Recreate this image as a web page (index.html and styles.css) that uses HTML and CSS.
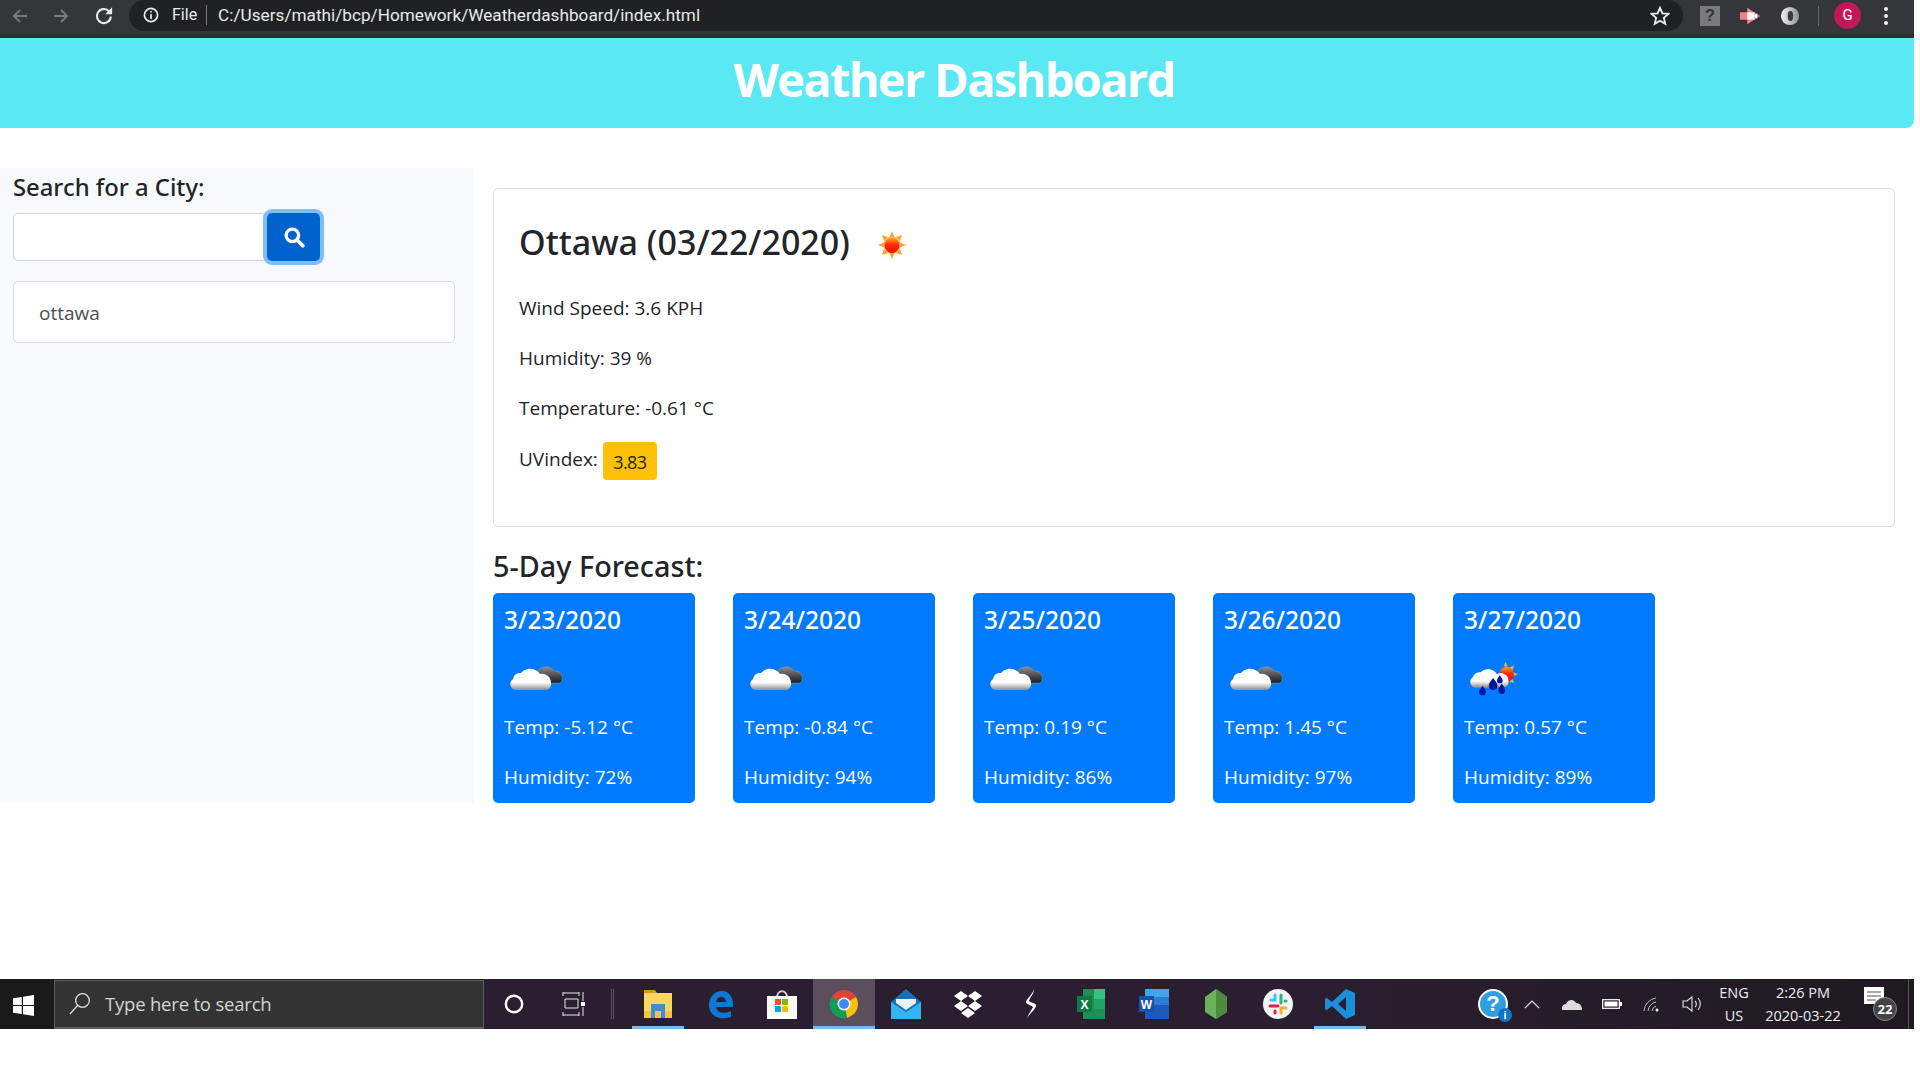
FILE: index.html
```html
<!DOCTYPE html>
<html lang="en">
<head>
<meta charset="utf-8">
<title>Weather Dashboard</title>
<link rel="stylesheet" href="styles.css">
</head>
<body>
<svg class="defs" width="0" height="0" aria-hidden="true">
  <defs>
    <linearGradient id="cloudFront" x1="0" y1="0" x2="0" y2="1"><stop offset="0" stop-color="#fff"/><stop offset=".65" stop-color="#fdfdfd"/><stop offset="1" stop-color="#8d8d8d"/></linearGradient>
    <linearGradient id="cloudBack" x1="0" y1="0" x2="0" y2="1"><stop offset="0" stop-color="#8a8a8a"/><stop offset="1" stop-color="#1c1c1c"/></linearGradient>
    <linearGradient id="sunCore" x1="0" y1="0" x2="0" y2="1"><stop offset="0" stop-color="#ffa01f"/><stop offset=".45" stop-color="#ff2a0a"/><stop offset="1" stop-color="#f01000"/></linearGradient>
    <symbol id="clouds" viewBox="0 0 54 30">
      <path d="M27 12a9 9 0 0 1 8-7a9 9 0 0 1 9 4a7 7 0 0 1 8 9a3 3 0 0 1-3 3H31z" fill="url(#cloudBack)" stroke="#a9a9a9" stroke-width=".4"/>
      <path d="M6 28a6 6 0 0 1-3-11a7 7 0 0 1 8-6a12 12 0 0 1 19 1a9 9 0 0 1 11 9a6 6 0 0 1-4 7z" fill="url(#cloudFront)"/>
    </symbol>
  </defs>
</svg>

<div class="browser-bar">
  <div class="nav-icons">
    <svg class="ico16" viewBox="0 0 16 16"><path d="M15 8H2M8 2L2 8l6 6" class="stroke-dim"/></svg>
    <svg class="ico16" viewBox="0 0 16 16"><path d="M1 8h13M8 2l6 6-6 6" class="stroke-dim"/></svg>
    <svg class="ico18" viewBox="0 0 16 16"><path d="M13.500 8.500A5.600 5.600 0 1 1 12 4.200" class="stroke-light"/><path d="M14.500 1v5.500H9z" fill="#e8eaed"/></svg>
  </div>
  <div class="omnibox">
    <div class="omni-left">
      <svg class="ico16" viewBox="0 0 16 16"><circle cx="8" cy="8" r="6.600" class="stroke-light"/><path d="M8 4v1.600M8 7v5" class="stroke-light"/></svg>
      <span class="omni-file">File</span>
      <span class="omni-sep"></span>
      <span class="omni-url">C:/Users/mathi/bcp/Homework/Weatherdashboard/index.html</span>
    </div>
    <svg class="ico18" viewBox="0 0 18 18"><path d="M9 1.600l2.200 5 5.400.5-4.100 3.600 1.200 5.300L9 13.300 4.300 16l1.200-5.300L1.400 7.100l5.400-.5z" class="stroke-light"/></svg>
  </div>
  <div class="ext-icons">
    <span class="ext-help">?</span>
    <svg class="ext-svg" viewBox="0 0 22 18"><path d="M0 5h8V0l14 9-14 9v-5H0z" fill="#fb7e84"/><path d="M8 5h8v8H8z" fill="#fff"/><path d="M16 8l3-2v6l-3-2z" fill="#fff"/></svg>
    <svg class="ext-svg" viewBox="0 0 22 22"><defs><linearGradient id="ring" x1="0" x2="1"><stop offset="0" stop-color="#f2f2f2"/><stop offset="1" stop-color="#8f8f8f"/></linearGradient></defs><circle cx="11" cy="11" r="10" fill="url(#ring)"/><ellipse cx="11.500" cy="11" rx="3" ry="5.500" fill="#3a3a3d"/></svg>
    <span class="ext-sep"></span>
    <span class="avatar">G</span>
    <span class="kebab"><i></i><i></i><i></i></span>
  </div>
</div>

<header class="hero"><h1>Weather Dashboard</h1></header>

<main class="page">
  <aside class="sidebar">
    <h4 class="search-title">Search for a City:</h4>
    <form class="search-row">
      <input class="search-input" type="text" aria-label="City">
      <button class="search-btn" type="button" aria-label="Search">
        <svg viewBox="0 0 20 20" width="22" height="22"><circle cx="8.500" cy="8.500" r="5.700" fill="none" stroke="#fff" stroke-width="3"/><path d="M13 13l5 5" stroke="#fff" stroke-width="3.400" stroke-linecap="round"/></svg>
      </button>
    </form>
    <ul class="history"><li>ottawa</li></ul>
  </aside>

  <section class="content">
    <div class="today">
      <h3 class="today-title">Ottawa (03/22/2020)
        <svg class="sun" viewBox="0 0 30 30">
          <g fill="#f9a332">
            <path d="M15 1l2.500 6h-5zM15 29l2.500-6h-5zM1 15l6-2.500v5zM29 15l-6-2.500v5z"/>
            <path d="M5 5l6 2-4 4zM25 5l-2 6-4-4zM5 25l2-6 4 4zM25 25l-6-2 4-4z"/>
          </g>
          <circle cx="15" cy="15" r="8.700" fill="#fbb45c"/>
          <circle cx="15" cy="15.500" r="7.500" fill="url(#sunCore)"/>
        </svg>
      </h3>
      <p>Wind Speed: 3.6 KPH</p>
      <p>Humidity: 39 %</p>
      <p>Temperature: -0.61 °C</p>
      <p class="uv">UVindex: <span class="uv-badge">3.83</span></p>
    </div>

    <h4 class="forecast-title">5-Day Forecast:</h4>
    <div class="forecast">
      <article class="day">
        <h5>3/23/2020</h5>
        <svg class="wx" viewBox="0 0 54 30"><use href="#clouds"/></svg>
        <p>Temp: -5.12 °C</p><p>Humidity: 72%</p>
      </article>
      <article class="day">
        <h5>3/24/2020</h5>
        <svg class="wx" viewBox="0 0 54 30"><use href="#clouds"/></svg>
        <p>Temp: -0.84 °C</p><p>Humidity: 94%</p>
      </article>
      <article class="day">
        <h5>3/25/2020</h5>
        <svg class="wx" viewBox="0 0 54 30"><use href="#clouds"/></svg>
        <p>Temp: 0.19 °C</p><p>Humidity: 86%</p>
      </article>
      <article class="day">
        <h5>3/26/2020</h5>
        <svg class="wx" viewBox="0 0 54 30"><use href="#clouds"/></svg>
        <p>Temp: 1.45 °C</p><p>Humidity: 97%</p>
      </article>
      <article class="day">
        <h5>3/27/2020</h5>
        <svg class="wx wx-rain" viewBox="0 0 54 36">
          <g fill="#f5b041"><path d="M37 0l2 5h-4zM50 13l-5 2v-4zM46 4l-2 5-3-3zM46 22l-5-1 3-3z"/></g>
          <circle cx="38" cy="13" r="7.500" fill="url(#sunCore)"/>
          <path d="M6 27a6 6 0 0 1-3-11a7 7 0 0 1 8-5a11 11 0 0 1 17 2a8 8 0 0 1 12 7a6 6 0 0 1-5 7z" fill="url(#cloudFront)"/>
          <g fill="#00169c">
            <path d="M13 25c3 4 3.500 5 3.500 6.500a3.500 3.500 0 0 1-7 0c0-1.500.5-2.500 3.500-6.500z"/>
            <path d="M24 17c3.500 4.500 4.500 6 4.500 8a4.500 4.500 0 0 1-9 0c0-2 1-3.500 4.500-8z"/>
            <path d="M31 14c2 3 3 4 3 5.500a3 3 0 0 1-6 0c0-1.500 1-2.500 3-5.500z"/>
            <path d="M33 23c3 4 3.500 5 3.500 7a3.500 3.500 0 0 1-7 0c0-2 .5-3 3.500-7z"/>
          </g>
        </svg>
        <p>Temp: 0.57 °C</p><p>Humidity: 89%</p>
      </article>
    </div>
  </section>
</main>

<footer class="taskbar">
  <div class="start">
    <svg width="21" height="21" viewBox="0 0 21 21"><path d="M0 3.200l8.800-1.300v8H0zM10 1.700L21 0v9.900H10zM0 11.100h8.800v8L0 17.800zM10 11.100h11V21l-11-1.700z" fill="#fff"/></svg>
  </div>
  <div class="search-box">
    <svg width="22" height="24" viewBox="0 0 22 24"><circle cx="13.500" cy="8.500" r="6.800" fill="none" stroke="#ddd" stroke-width="1.300"/><path d="M8.500 13.500L1 22" stroke="#ddd" stroke-width="1.300"/></svg>
    <span>Type here to search</span>
  </div>
  <div class="tb-sys">
    <svg width="20" height="20" viewBox="0 0 20 20"><circle cx="10" cy="10" r="8.200" fill="none" stroke="#fff" stroke-width="2.400"/></svg>
    <svg width="24" height="24" viewBox="0 0 24 24"><path d="M1 4V0M17 4V0M1 1h16M3 7h13v9H3zM1 23h16M1 24v-4M17 24v-4M21 0v9M21 15v9" fill="none" stroke="#e8e8e8" stroke-width="1"/><rect x="19" y="10" width="4" height="4" fill="#fff"/></svg>
    <span class="tb-sep"></span>
  </div>
  <div class="tb-apps">
    <span class="app running">
      <svg viewBox="0 0 30 30"><path d="M1 1h11l2 3h-13z" fill="#d29b1f"/><path d="M1 4h28v25H1z" fill="#fdd662"/><path d="M1 22h28v7H1z" fill="#f5c242"/><path d="M8 15h14v14h-4v-7h-6v7H8z" fill="#3f8fce"/></svg>
    </span>
    <span class="app">
      <svg viewBox="0 0 30 30"><path d="M28 18H11c.5 5 7 8 15 4v6c-11 4-22-1-22-12C4 8 10 2 17 2c7 0 11 6 11 13zM21 13c0-6-9-7-10 0z" fill="#0f77d6"/></svg>
    </span>
    <span class="app">
      <svg viewBox="0 0 30 30"><path d="M10 9c0-9 10-9 10 0" fill="none" stroke="#cfcfcf" stroke-width="2"/><path d="M0 7h30v23H0z" fill="#fff"/><path d="M8 10h6v6H8z" fill="#f25022"/><path d="M15 10h6v6h-6z" fill="#7fba00"/><path d="M8 17h6v6H8z" fill="#00a4ef"/><path d="M15 17h6v6h-6z" fill="#ffb900"/></svg>
    </span>
    <span class="app running active">
      <svg viewBox="0 0 30 30"><circle cx="15" cy="15" r="14" fill="#db4437"/><path d="M15 15L27 8a14 14 0 0 1-9 20.700z" fill="#f4c20d"/><path d="M15 15l3 13.700A14 14 0 0 1 2.600 8z" fill="#0f9d58"/><circle cx="15" cy="15" r="6.500" fill="#fff"/><circle cx="15" cy="15" r="5" fill="#4285f4"/></svg>
    </span>
    <span class="app">
      <svg viewBox="0 0 30 30"><path d="M0 13L15 0l15 13v17H0z" fill="#1b6fb5"/><path d="M0 13l15 10 15-10v17H0z" fill="#33b3f0"/><path d="M5 10h20v4l-10 7-10-7z" fill="#e8f3fb"/></svg>
    </span>
    <span class="app">
      <svg viewBox="0 0 30 30"><path d="M8 2l7 5-7 5-7-5zM22 2l7 5-7 5-7-5zM8 12l7 5-7 5-7-5zM22 12l7 5-7 5-7-5zM15 19l7 5-7 5-7-5z" fill="#fff"/></svg>
    </span>
    <span class="app">
      <svg viewBox="0 0 30 30"><path d="M19 0c-1 5-7 9-8 13-.5 2 5 3 7 5-2 4-5 7-6 12 1-4 8-9 9-13 .5-3-5-3-7-5 1-4 5-7 5-12z" fill="#fff"/></svg>
    </span>
    <span class="app">
      <svg viewBox="0 0 30 30"><path d="M6 0h22v30H6z" fill="#1e8f55"/><path d="M17 0h11v10H17z" fill="#33c481"/><path d="M17 10h11v10H17z" fill="#21a366"/><path d="M0 7h15v16H0z" fill="#107c41"/><text x="7.500" y="20" class="office-letter">X</text></svg>
    </span>
    <span class="app">
      <svg viewBox="0 0 30 30"><path d="M6 0h24v30H6z" fill="#185abd"/><path d="M6 0h24v8H6z" fill="#41a5ee"/><path d="M6 8h24v8H6z" fill="#2b7cd3"/><path d="M0 7h15v16H0z" fill="#1553b0"/><text x="7.500" y="20" class="office-letter">W</text></svg>
    </span>
    <span class="app">
      <svg viewBox="0 0 30 30"><path d="M15 0l11 8v15l-11 7-11-7V8z" fill="#69b25a"/><path d="M15 0l11 8v15l-11 7z" fill="#4b8c3f"/></svg>
    </span>
    <span class="app">
      <svg viewBox="0 0 30 30"><circle cx="15" cy="15" r="15" fill="#f4f4f4"/><path d="M12 6v5H8" stroke="#36c5f0" stroke-width="3" fill="none" stroke-linecap="round"/><path d="M18 6v8" stroke="#2eb67d" stroke-width="3" stroke-linecap="round"/><path d="M22 12h1" stroke="#2eb67d" stroke-width="3" stroke-linecap="round"/><path d="M7 17h8" stroke="#e01e5a" stroke-width="3" stroke-linecap="round"/><path d="M12 22v2" stroke="#e01e5a" stroke-width="3" stroke-linecap="round"/><path d="M18 24v-5h5" stroke="#ecb22e" stroke-width="3" fill="none" stroke-linecap="round"/></svg>
    </span>
    <span class="app running">
      <svg viewBox="0 0 30 30"><path d="M21 0l9 4v22l-9 4-14-13-5 4-2-1V10l2-1 5 4zM21 8l-8 7 8 7z" fill="#1a8fdc"/></svg>
    </span>
  </div>
  <div class="tray">
    <span class="tray-help">?<i>i</i></span>
    <svg class="tray-ic" viewBox="0 0 20 20"><path d="M3 14l7-7 7 7" fill="none" stroke="#e4e4e4" stroke-width="1.200"/></svg>
    <svg class="tray-ic" viewBox="0 0 20 20"><path d="M0 16c-1-4 2-6 4-6 2-5 8-5 10-1 4 0 6 3 6 7z" fill="#dcdcdc"/></svg>
    <svg class="tray-ic" viewBox="0 0 20 20"><rect x=".7" y="5.700" width="16.600" height="8.600" fill="none" stroke="#fff" stroke-width="1.200"/><rect x="2.500" y="7.500" width="13" height="5" fill="#fff"/><rect x="18" y="8" width="2" height="4" fill="#fff"/></svg>
    <svg class="tray-ic" viewBox="0 0 20 20"><g fill="none" stroke="#bbb" stroke-width="1"><path d="M2 17A14 14 0 0 1 14 4"/><path d="M6 17A10 10 0 0 1 14 8"/><path d="M10 17a6 6 0 0 1 4-5"/></g><circle cx="15" cy="16" r="1.500" fill="#fff"/></svg>
    <svg class="tray-ic" viewBox="0 0 20 20"><path d="M1 7h4l5-4v14l-5-4H1z" fill="none" stroke="#e4e4e4" stroke-width="1.100"/><path d="M13 7a4 4 0 0 1 0 6M16 4a9 9 0 0 1 0 12" fill="none" stroke="#e4e4e4" stroke-width="1.100"/></svg>
    <div class="lang"><span>ENG</span><span>US</span></div>
    <div class="clock"><span>2:26 PM</span><span>2020-03-22</span></div>
    <div class="notif">
      <svg width="20" height="20" viewBox="0 0 20 20"><path d="M0 0h20v17H0z" fill="#fff"/><path d="M3 5h14M3 9h14M3 13h9" stroke="#555" stroke-width="1"/></svg>
      <span class="notif-count">22</span>
    </div>
    <span class="tray-end"></span>
  </div>
</footer>
</body>
</html>
```

FILE: styles.css
```css
* { box-sizing: border-box; }
html, body { margin: 0; padding: 0; background: #fff; }
body {
  width: 1914px;
  height: 1080px;
  display: flex;
  flex-direction: column;
  overflow: hidden;
  font-family: "Open Sans", "Noto Sans", sans-serif;
  color: #212529;
}
.defs { position: absolute; }

/* browser chrome */
.browser-bar {
  height: 38px;
  flex: none;
  background: #35363a;
  display: flex;
  align-items: flex-start;
  box-shadow: inset 0 -4px 0 #2c2d30;
}
.nav-icons { width: 129px; height: 31px; display: flex; align-items: center; padding-left: 12px; gap: 25px; }
.ico16 { width: 16px; height: 16px; flex: none; }
.ico18 { width: 20px; height: 20px; flex: none; }
.stroke-dim { fill: none; stroke: #7b7c80; stroke-width: 1.800; }
.stroke-light { fill: none; stroke: #e8eaed; stroke-width: 1.700; }
.omnibox {
  width: 1554px;
  height: 31px;
  background: #202124;
  border-radius: 16px;
  display: flex;
  align-items: center;
  justify-content: space-between;
  padding: 0 13px 0 14px;
}
.omni-left { display: flex; align-items: center; padding-bottom: 2px; }
.omni-file { margin-left: 13px; color: #e8eaed; font: 16px/20px Roboto, sans-serif; }
.omni-sep { width: 1px; height: 20px; background: #77787c; margin: 0 11px 0 9px; }
.omni-url { color: #e8eaed; font: 17.200px/20px Roboto, sans-serif; }
.ext-icons { flex: 1; height: 31px; display: flex; align-items: center; padding-left: 17px; }
.ext-help { width: 20px; height: 20px; background: #7a7a7a; color: #35363a; font: bold 17px/20px "Liberation Sans", sans-serif; text-align: center; }
.ext-svg { width: 20px; height: 20px; margin-left: 20px; flex: none; }
.ext-sep { width: 1px; height: 20px; background: #66676b; margin-left: 18px; }
.avatar { width: 27px; height: 27px; border-radius: 50%; background: #c2185b; color: #fff; font: 15px/27px Roboto, sans-serif; text-align: center; margin-left: 15px; }
.kebab { display: flex; flex-direction: column; gap: 3px; margin-left: 23px; }
.kebab i { width: 4px; height: 4px; border-radius: 50%; background: #f0f0f0; display: block; }

/* banner */
.hero {
  height: 90px;
  flex: none;
  background: #5ae8f2;
  border-bottom-right-radius: 8px;
  display: flex;
  align-items: center;
  justify-content: center;
  padding-right: 6px;
}
.hero h1 { margin: 0 0 8px 0; font-size: 47px; line-height: 60px; font-weight: 700; color: #fff; letter-spacing: -1.700px; }

/* page */
.page { height: 635px; flex: none; margin-top: 40px; display: flex; }
.sidebar { width: 474px; flex: none; background: #f8f9fa; padding: 0 19px 0 13px; }
.search-title { margin: 2px 0 8px; font-family: "Noto Sans", sans-serif; font-size: 23.800px; line-height: 35px; font-weight: 500; height: 35px; color: #212529; }
.search-row { display: flex; align-items: stretch; height: 48px; }
.search-input { width: 254px; height: 48px; border: 1px solid #ced4da; border-radius: 5px 0 0 5px; background: #fff; padding: 0; outline: none; }
.search-btn { width: 53px; height: 48px; border: 0; background: #0062cc; border-radius: 5px; box-shadow: 0 0 0 4px #80bdff; padding: 0; display: flex; align-items: center; justify-content: center; position: relative; }
.history { list-style: none; margin: 20px 0 0; padding: 0; }
.history li { height: 62px; border: 1px solid #dfdfdf; border-radius: 5px; background: #fff; color: #495057; font-size: 19px; line-height: 62px; padding-left: 25px; }

.content { flex: 1; padding: 20px 19px 0; min-width: 0; }
.today { height: 339px; border: 1px solid #dfdfdf; border-radius: 5px; background: #fff; padding: 31px 26px 0 25px; }
.today-title { margin: 0 0 11px; font-family: "Noto Sans", sans-serif; font-size: 34px; line-height: 44px; font-weight: 500; height: 65px; color: #212529; display: flex; align-items: flex-start; }
.sun { width: 30px; height: 30px; margin: 10px 0 0 27px; flex: none; }
.today p { margin: 0 0 26px; font-size: 19px; line-height: 24px; color: #212529; }
.today p.uv { margin: -4px 0 0; display: flex; align-items: flex-start; height: 38px; gap: 5px; line-height: 34px; }
.uv-badge { width: 54px; height: 38px; background: #ffc107; border-radius: 4px; font-size: 18px; line-height: 40px; text-align: center; letter-spacing: -.6px; }

.forecast-title { margin: 19px 0 0; font-family: "Noto Sans", sans-serif; font-size: 28.800px; line-height: 40px; height: 46px; font-weight: 500; }
.forecast { display: flex; gap: 38px; padding-top: 1px; }
.day { width: 202px; height: 210px; background: #007bff; color: #fff; border-radius: 5px; padding: 10px 11px 0; }
.day h5 { margin: 0; font-family: "Noto Sans", sans-serif; font-size: 24.500px; line-height: 34px; font-weight: 500; color: #fff; height: 34px; }
.wx { width: 54px; height: 30px; display: block; margin: 25px 0 23px 6px; }
.wx-rain { width: 52px; height: 36px; margin: 24px 0 18px 6px; }
.day p { margin: 0 0 26px; font-size: 19px; line-height: 24px; color: #fff; }

/* taskbar */
.taskbar {
  margin-top: auto;
  margin-bottom: 51px;
  height: 50px;
  flex: none;
  display: flex;
  align-items: stretch;
  background: linear-gradient(90deg, #2b1e30 0%, #2b1e30 70%, #1e1a20 100%);
}
.start { width: 54px; background: #1a1a1a; display: flex; align-items: center; padding: 2px 0 0 13px; }
.search-box { width: 430px; margin-top: 1px; background: #333; border: 1px solid #5e5e5e; border-bottom-width: 2px; display: flex; align-items: center; padding-left: 14px; gap: 14px; }
.search-box span { color: #d4d4d4; font-size: 18.500px; line-height: 24px; letter-spacing: -.2px; }
.tb-sys { width: 128px; display: flex; align-items: center; padding-left: 20px; gap: 38px; flex: none; }
.tb-sys svg { flex: none; }
.tb-sep { width: 3px; height: 30px; border-left: 1px solid #5b505f; border-right: 1px solid #5b505f; margin-left: -13px; flex: none; }
.tb-apps { display: flex; flex: none; margin-left: 15px; }
.app { width: 62px; display: flex; align-items: center; justify-content: center; position: relative; }
.app svg { width: 30px; height: 30px; }
.app.active { background: #5b4f5e; }
.app.running::after { content: ""; position: absolute; left: 5px; right: 5px; bottom: 0; height: 3px; background: #76b9ed; }
.app.active::after { left: 0; right: 0; }
.office-letter { fill: #fff; font: bold 12px "Liberation Sans", sans-serif; text-anchor: middle; }
.tray { flex: 1; display: flex; align-items: center; padding-left: 107px; min-width: 0; }
.tray-help { width: 30px; height: 30px; flex: none; margin-right: -6px; border-radius: 50%; background: #2f9fe0; border: 2px solid #fff; color: #fff; font: bold 22px/26px "Liberation Sans", sans-serif; text-align: center; position: relative; }
.tray-help i { position: absolute; right: -6px; bottom: -5px; width: 14px; height: 14px; border-radius: 50%; background: #1574c4; font: bold 11px/14px "Liberation Sans", sans-serif; }
.tray-ic { width: 20px; height: 20px; margin-left: 20px; flex: none; }
.lang, .clock { display: flex; flex-direction: column; align-items: center; color: #eee; font-size: 14.500px; line-height: 23px; flex: none; }
.lang { margin-left: 7px; width: 50px; }
.clock { width: 88px; }
.notif { margin-left: 17px; width: 36px; height: 34px; position: relative; flex: none; }
.notif-count { position: absolute; left: 9px; top: 10px; width: 24px; height: 24px; border-radius: 50%; background: #444; border: 1px solid #888; color: #fff; font-size: 13px; line-height: 22px; font-weight: 700; text-align: center; }
.tray-end { width: 1px; height: 50px; background: #555; margin-left: 8px; flex: none; }
```
